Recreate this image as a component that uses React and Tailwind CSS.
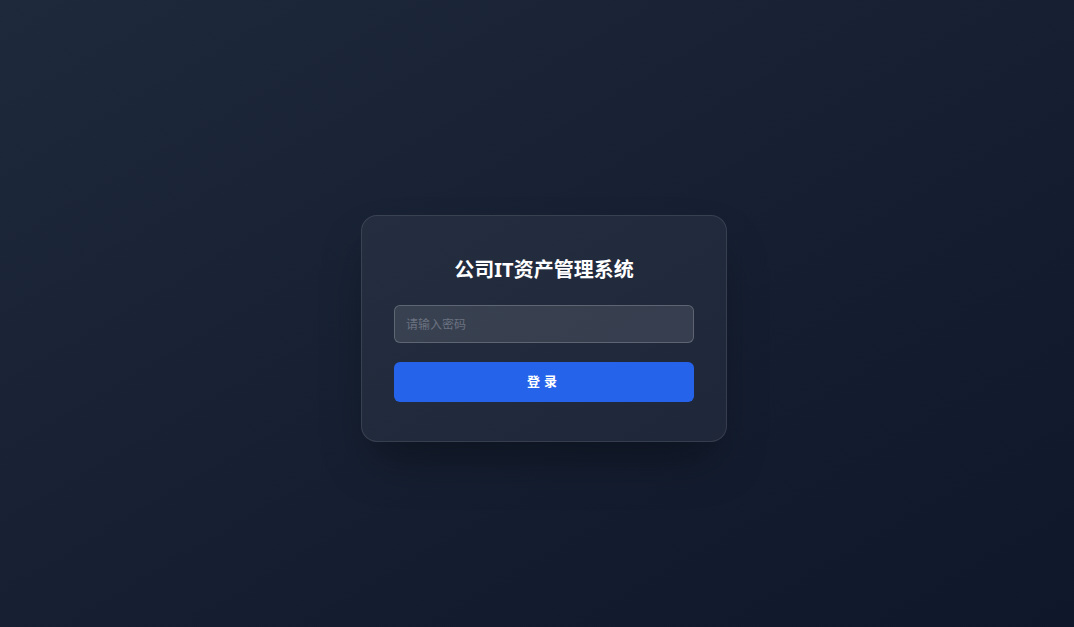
import React, { useState } from 'react';

const App = () => {
  const [password, setPassword] = useState('');

  return (
    <div
      className="min-h-screen w-full flex items-center justify-center pl-[14px] pt-[30px] bg-gradient-to-br from-[#1e293b] to-[#0f172a]"
      style={{ fontFamily: '"Noto Sans", "Noto Sans CJK SC", sans-serif' }}
    >
      {/* Carte de connexion */}
      <div className="w-[366px] rounded-2xl border border-white/10 bg-white/5 px-8 pt-10 pb-[39px] shadow-2xl shadow-black/40">
        <h1 className="text-center text-xl leading-7 font-bold text-white mb-[21px]">
          公司IT资产管理系统
        </h1>
        <input
          type="password"
          value={password}
          onChange={(e) => setPassword(e.target.value)}
          placeholder="请输入密码"
          className="block w-full h-[38px] rounded-md border border-white/20 bg-white/10 pl-[11px] pr-3 text-[12px] text-white placeholder:text-[#6b7280] outline-none"
        />
        <button
          type="button"
          className="mt-[19px] block w-full h-10 rounded-md bg-[#2563eb] text-[13px] font-bold text-white tracking-[0.3em]"
        >
          登录
        </button>
      </div>
    </div>
  );
};

export default App;
